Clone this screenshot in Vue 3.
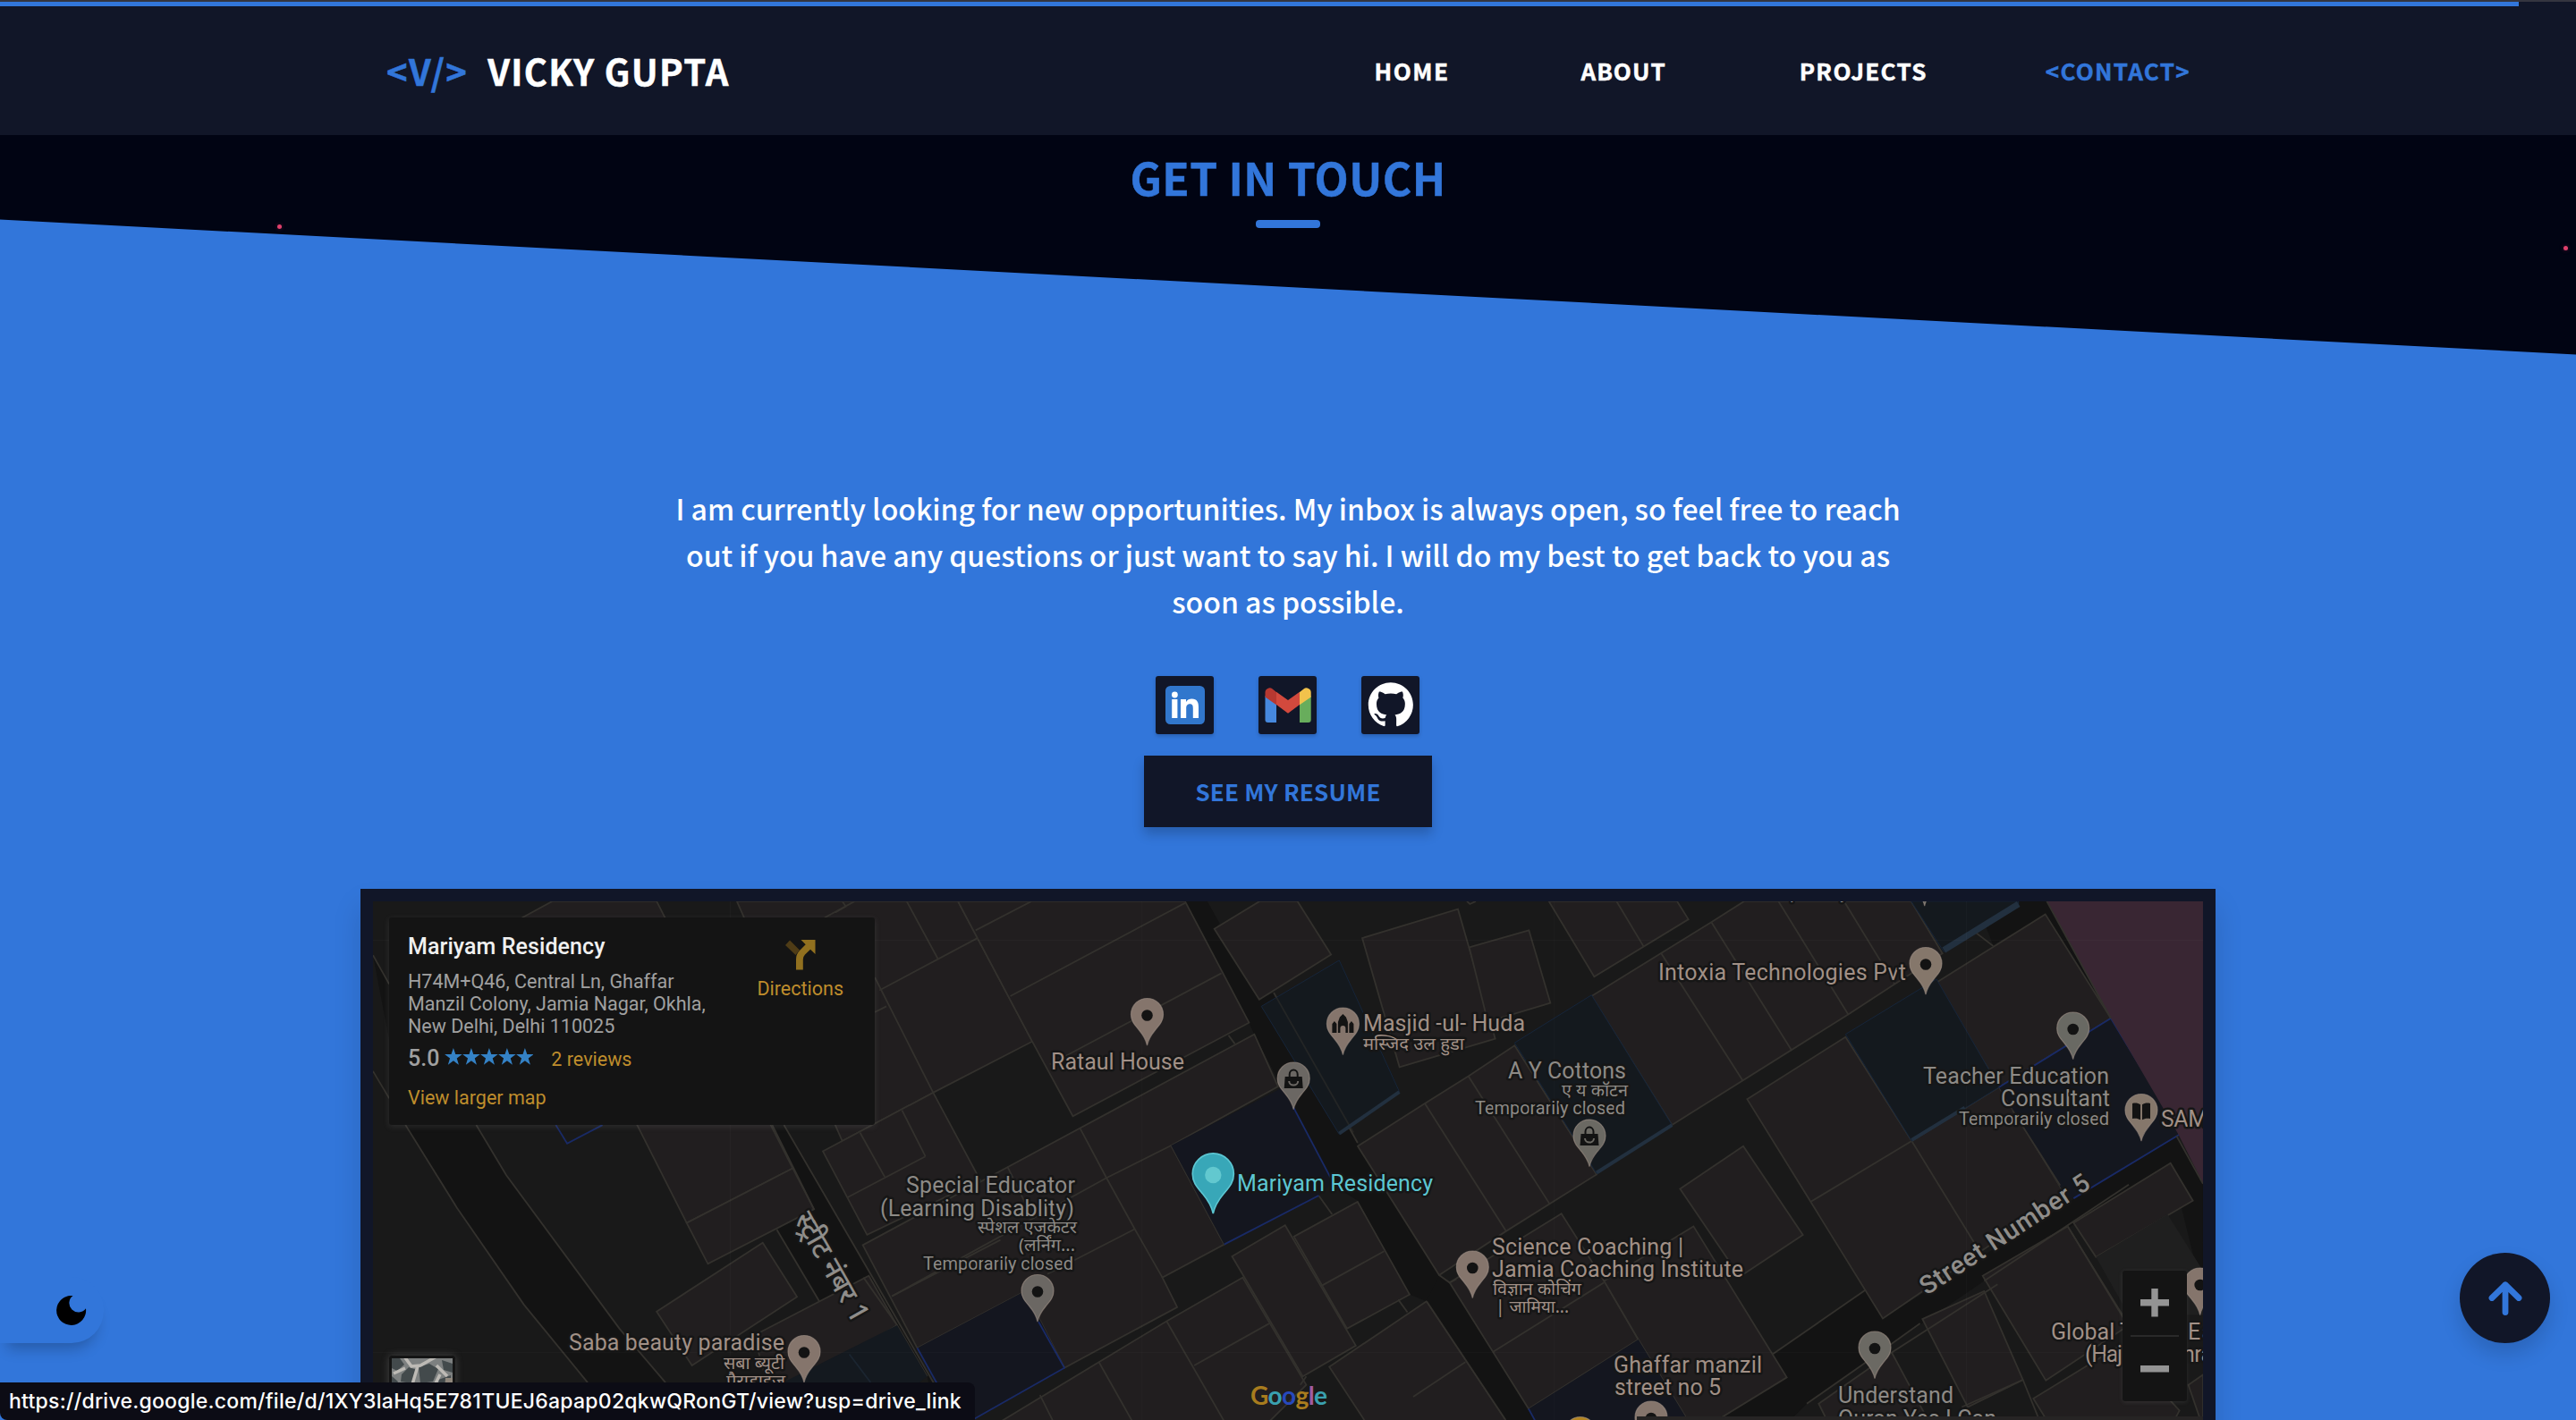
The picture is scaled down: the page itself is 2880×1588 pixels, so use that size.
<script setup>
const nav = [
  { label: 'HOME', spacing: 1.5, gap: 0 },
  { label: 'ABOUT', spacing: 1.04, gap: 147 },
  { label: 'PROJECTS', spacing: 1.3, gap: 149 },
  { label: '<CONTACT>', spacing: 1.3, gap: 132, active: true },
]

// Street grid, west half
const westRoads = [
  '43,205 135,703 280,945 470,1230 650,1458 740,1590 960,1590 870,1458 740,1300 420,850 335,703',
  '1170,703 1205,703 1450,1140 1640,1480 1640,1590 1610,1440 1525,1290 1445,1145 1305,1220 1185,1010 1290,950',
  '2339,47 2520,403 2535,437 2757,880 2828,925 2975,1200 3022,1220 3225,1590 3600,1590 3057,1143 2827,760 2590,315 2547,335 2422,128 2437,112 2402,47',
]
const westBlocks = [
  '465,95 550,47 845,47 1230,830 930,990 790,703',
  '930,990 1230,830 1290,950 990,1110',
  '845,1250 1145,1048 1242,1207 945,1408',
  '1120,1320 1445,1145 1525,1290 1390,1375 1240,1450 1160,1470',
  '1072,47 1697,47 1907,458 1627,608 1370,750',
  '1315,780 1627,608 1760,865 1440,1025',
  '1697,47 2339,47 2520,403 2022,677 1907,458',
  '1428,1055 2535,437 2602,590 2300,763 2450,1053 2275,1150 2317,1237 1998,1415 1887,1190 1582,1357',
  '2422,128 2550,47 2657,47 2752,203 2549,335',
  '2472,1088 2622,997 2822,1350 2672,1440',
  '2647,1030 2827,928 2974,1200 2797,1300',
  '1790,1590 2287,1278 2502,1150 2682,1465 2560,1590',
  '2747,1412 3022,1220 3260,1590 2860,1590',
]
const westLines = [
  '43,205 89,290', '43,545 89,625', '135,703 280,945 470,1230 650,1458', '335,703 420,850 740,1300 870,1458',
  '1172,703 1290,950', '1205,703 1450,1140 1640,1480', '1185,1010 1305,1220', '1430,1150 1525,1290 1610,1440',
  '1420,725 1490,855', '1385,915 1605,795', '1539,660 1605,795', '1495,355 1462,372', '1475,308 1752,155',
  '1552,47 1640,215', '1462,270 1627,608', '1320,95 1405,47', '1370,47 1380,62 1350,80',
  '1747,132 1905,47', '1845,325 2339,52', '1957,525 2442,258', '1837,825 1905,970', '2042,712 2117,858 2197,1008 2275,1150',
  '2117,858 2300,763', '2300,763 2450,1053', '2197,1008 1950,1140', '2117,858 1510,1205', '1510,1205 1817,1040',
  '2724,1175 2902,1073', '2365,1408 2577,1285', '2287,1278 2460,1590', '1929,1495 1975,1590', '2095,1397 2200,1590',
  '2462,440 2480,465', '2717,910 2755,965', '2942,1215 2968,1252', '2682,1440 2665,1465', '2590,315 2827,755',
]
// Street grid, east half
const eastRoads = [
  '1145,1375 1455,1188 1515,1270 2155,920 2500,735 2589,870 2589,1200 2480,815 1855,1160 1545,1345 1260,1520 1180,1590 960,1568 1193,1443',
  '-15,1220 27,1143 62,1165 327,1535 350,1590 250,1568',
  '1970,47 2065,47 2280,390 2060,85 1885,175 1860,120 1970,60',
]
const eastBlocks = [
  '-231,155 90,70 215,450 -106,533',
  '128,182 328,132 400,345 190,400',
  '395,47 825,47 863,100 547,268',
  '-246,765 -21,640 125,560 280,470 555,848 250,1015 27,1143',
  '538,325 940,108 1050,47 1610,47 1715,200 1555,290 1400,378 808,703',
  '1695,285 2060,85 2280,390 1905,592',
  '1060,627 1390,445 1612,750 1905,592 2125,905 1515,1270',
  '835,890 1047,765 1247,1025 1035,1148',
  '62,1165 437,963 580,1160 695,1332 327,1535',
  '580,1160 880,1000 1193,1443 960,1568 860,1568 695,1332',
  '1648,1272 1855,1190 1985,1450 1800,1530',
  '1850,1145 2135,1000 2340,1290 2062,1452',
  '2155,990 2480,815 2555,925 2230,1090',
  '2020,1505 2310,1350 2510,1540 2480,1590 2080,1590',
  '2540,1465 2589,1435 2589,1590',
  '1300,1520 1545,1370 1680,1590 1340,1590',
]
const eastLines = [
  '622,47 713,180', '125,560 398,935', '-21,640 250,1012', '772,200 1045,572', '940,108 1210,485', '1165,47 1400,380', '1385,47 1555,290',
  '1275,927 1612,750 1830,1060', '208,1368 580,1165', '-60,1500 115,1398', '27,1143 62,1165 85,1155', '-15,1220 250,1568',
  '1690,47 1885,178', '1545,1370 1900,1170', '1855,1160 2340,878', '1985,1450 2040,1568', '2135,1000 2330,1280', '1145,1375 1455,1188', '1260,1520 1440,1410 1640,1285',
  '1780,1530 1985,1450', '120,47 130,55 150,47',
]

const brown = '#a19086'
const grey = '#8d8a86'
const cyan = '#5cc6d2'
const labels = [
  { t: 'Rataul House', x: 1175, y: 1196, w: 149, c: brown },
  { t: 'Masjid -ul- Huda', x: 1524, y: 1153, w: 181, c: brown },
  { t: 'मस्जिद उल हुडा', x: 1524, y: 1174, w: 113, c: brown, s: 19, hi: true },
  { t: 'Mariyam Residency', x: 1383, y: 1332, w: 219, c: cyan },
  { t: 'Special Educator', x: 1013, y: 1334, w: 189, c: grey },
  { t: '(Learning Disablity)', x: 984, y: 1360, w: 217, c: grey },
  { t: 'स्पेशल एजकेटर', x: 1093, y: 1379, w: 111, c: grey, s: 19, hi: true },
  { t: '(लर्निंग...', x: 1139, y: 1399, w: 63, c: grey, s: 19, hi: true },
  { t: 'Temporarily closed', x: 1032, y: 1420, w: 168, c: grey, s: 20 },
  { t: 'Saba beauty paradise', x: 636, y: 1510, w: 241, c: brown },
  { t: 'सबा ब्यूटी', x: 809, y: 1531, w: 68, c: brown, s: 19, hi: true },
  { t: 'पैराडाइज', x: 812, y: 1551, w: 66, c: brown, s: 19, hi: true },
  { t: 'A Y Cottons', x: 1686, y: 1206, w: 132, c: grey },
  { t: 'ए य कॉटन', x: 1746, y: 1226, w: 74, c: grey, s: 19, hi: true },
  { t: 'Temporarily closed', x: 1649, y: 1246, w: 168, c: grey, s: 20 },
  { t: 'Intoxia Technologies Pvt', x: 1854, y: 1096, w: 277, c: brown },
  { t: 'Teacher Education', x: 2150, y: 1212, w: 208, c: grey },
  { t: 'Consultant', x: 2237, y: 1237, w: 122, c: grey },
  { t: 'Temporarily closed', x: 2190, y: 1258, w: 168, c: grey, s: 20 },
  { t: 'SAM', x: 2416, y: 1260, w: 52, c: brown },
  { t: 'Science Coaching |', x: 1668, y: 1403, w: 214, c: brown },
  { t: 'Jamia Coaching Institute', x: 1668, y: 1428, w: 281, c: brown },
  { t: 'विज्ञान कोचिंग', x: 1669, y: 1448, w: 99, c: brown, s: 19, hi: true },
  { t: '| जामिया...', x: 1672, y: 1468, w: 82, c: brown, s: 19, hi: true },
  { t: 'Ghaffar manzil', x: 1804, y: 1535, w: 166, c: brown },
  { t: 'street no 5', x: 1805, y: 1560, w: 119, c: brown },
  { t: 'Understand', x: 2055, y: 1569, w: 129, c: grey },
  { t: 'Quran Yes I Can', x: 2055, y: 1595, w: 177, c: grey },
  { t: 'Global T', x: 2293, y: 1498, w: 92, c: brown },
  { t: 'Ea', x: 2446, y: 1498, w: 29, c: brown },
  { t: '(Haj', x: 2331, y: 1523, w: 42, c: brown },
  { t: 'mra', x: 2432, y: 1523, w: 42, c: brown },
  { t: 'Temporarily closed', x: 1962, y: 1005, w: 168, c: grey, s: 20 },
]

const pins = [
  { x: 1282.5, y: 1169, c: '#85756c' },
  { x: 1501.4, y: 1179.5, c: '#85756c', k: 'mosque' },
  { x: 1446.2, y: 1240.5, c: '#6b6763', k: 'bag' },
  { x: 1160, y: 1478, c: '#6b6763' },
  { x: 899, y: 1546, c: '#85756c' },
  { x: 1646.3, y: 1451.5, c: '#85756c' },
  { x: 1777, y: 1304.6, c: '#6b6963', k: 'bag' },
  { x: 2153, y: 1112, c: '#85776b' },
  { x: 2317.7, y: 1184.5, c: '#696963' },
  { x: 2394, y: 1276, c: '#85776b', k: 'book' },
  { x: 2459.7, y: 1470.5, c: '#85756c' },
  { x: 2096, y: 1541.5, c: '#6b6963' },
  { x: 1846, y: 1619.5, c: '#85756c' },
  { x: 1766.7, y: 1637, c: '#b38420' },
  { x: 2151.7, y: 1013, c: '#6b6963' },
]
</script>

<template>
  <div class="page">
    <div class="progress"><span class="progress-bar"></span></div>

    <header class="header">
      <div class="brand">
        <span class="brand-mark">&lt;V/&gt;</span>
        <span class="brand-name">VICKY GUPTA</span>
      </div>
      <nav class="nav">
        <a
          v-for="n in nav"
          :key="n.label"
          :class="{ active: n.active }"
          :style="{ letterSpacing: n.spacing + 'px', marginLeft: n.gap + 'px' }"
        >{{ n.label }}</a>
      </nav>
    </header>

    <main class="contact">
      <i class="slope"></i>
      <i class="spark spark-left"></i>
      <i class="spark spark-right"></i>

      <h2 class="title">GET IN TOUCH</h2>
      <span class="underline"></span>

      <p class="intro">
        I am currently looking for new opportunities. My inbox is always open, so feel free to reach<br />
        out if you have any questions or just want to say hi. I will do my best to get back to you as<br />
        soon as possible.
      </p>

      <div class="socials">
        <a class="social">
          <svg viewBox="0 0 65 65">
            <rect x="11" y="11" width="44" height="43" rx="5.5" fill="#3177cd" />
            <circle cx="21.4" cy="21" r="3.4" fill="#fff" />
            <path fill="#fff" d="M18.2 26h6.2v21h-6.2zM28 26h6v2.900c1.300-2.300 3.700-3.400 6.500-3.400 6 0 7.500 4 7.500 9.200V47h-6.200V36.300c0-2.500-.2-5-3.500-5s-4.100 2.400-4.100 5V47H28z" />
          </svg>
        </a>
        <a class="social">
          <svg viewBox="0 0 65 65">
            <path fill="#4688de" d="M7.500 22 20 31v21h-9.500a3 3 0 0 1-3-3z" />
            <path fill="#68ad5c" d="M58.700 22 46 31v21h9.700a3 3 0 0 0 3-3z" />
            <path fill="#b73831" d="M7.500 23.500v-5a5 5 0 0 1 8.200-3.900L20 18v14.200z" />
            <path fill="#f2c24c" d="M58.700 23.500v-5a5 5 0 0 0-8.200-3.900L46 18v14.200z" />
            <path fill="#d2493d" d="m20 17.700 13 9.400 13-9.400v14.400l-13 9.600-13-9.600z" />
          </svg>
        </a>
        <a class="social">
          <svg viewBox="0 0 65 65">
            <path
              fill="#fff"
              transform="translate(7.800 7.300) scale(3.130)"
              d="M8 0C3.580 0 0 3.580 0 8c0 3.540 2.290 6.530 5.470 7.590.4.070.55-.17.55-.38 0-.19-.01-.82-.01-1.490-2.010.37-2.530-.49-2.690-.94-.09-.23-.48-.94-.82-1.130-.28-.15-.68-.52-.01-.53.63-.01 1.080.58 1.230.82.72 1.210 1.870.87 2.330.66.070-.52.28-.87.51-1.070-1.780-.2-3.640-.89-3.640-3.950 0-.87.31-1.590.82-2.150-.08-.2-.36-1.020.08-2.120 0 0 .67-.21 2.200.82.64-.18 1.320-.27 2-.27s1.360.09 2 .27c1.530-1.040 2.200-.82 2.200-.82.44 1.100.16 1.920.08 2.120.51.56.82 1.270.82 2.150 0 3.070-1.870 3.750-3.650 3.950.29.25.54.73.54 1.480 0 1.070-.01 1.930-.01 2.200 0 .21.15.46.55.38A8.010 8.010 0 0 0 16 8c0-4.420-3.580-8-8-8z"
            />
          </svg>
        </a>
      </div>

      <a class="resume">SEE MY RESUME</a>

      <section class="map">
        <svg class="map-canvas" viewBox="417 1008 2046 580">
          <defs>
            <path id="pin" d="M0 0C-1.500-7-4-11-9-17-14-23-18-27-18-34.500a18 18 0 0 1 36 0C18-27 14-23 9-17 4-11 1.500-7 0 0z" />
          </defs>
          <rect x="417" y="1008" width="2046" height="580" fill="#191919" />

          <g transform="translate(400 990) scale(0.3954 0.3814)">
            <polygon v-for="p in westRoads" :key="p" :points="p" fill="#131313" />
            <polygon v-for="p in westBlocks" :key="p" :points="p" class="block" />
            <polyline v-for="p in westLines" :key="p" :points="p" class="edge" />
            <polygon points="2300,763 2617,592 2757,870 2717,910 2450,1053" fill="#14161f" />
            <polyline points="2645,650 2757,870" class="edge blue" />
            <polyline points="2717,910 2450,1053" class="edge blue" />
            <polygon points="1582,1357 1887,1190 1998,1415 1745,1560 1690,1590 1637,1458" fill="#14161f" />
            <polyline points="1925,1280 1998,1415 1700,1590" class="edge blue" />
            <polyline points="1582,1357 1640,1465" class="edge blue" />
            <polygon points="1160,1480 1525,1290 1610,1440 1560,1480 1500,1590 1200,1590" fill="#14191f" />
            <polyline points="1390,1375 1450,1458" class="edge navy" />
            <polygon points="2555,355 2775,220 2945,605 2775,730" class="plot" />
            <polyline points="2590,315 2815,725" class="edge" opacity=".5" />
            <polyline points="2775,728 2945,606" class="edge lit" />
            <polyline points="560,703 592,757 692,703" class="edge blue" />
          </g>

          <g transform="translate(1600 990) scale(0.33333 0.3814)">
            <polygon v-for="p in eastRoads" :key="p" :points="p" fill="#131313" />
            <polygon v-for="p in eastBlocks" :key="p" :points="p" class="block" />
            <polyline v-for="p in eastLines" :key="p" :points="p" class="edge" />
            <polygon points="2230,1090 2470,965 2589,1130 2589,1260 2340,1260" fill="#1f1f1f" />
            <polygon points="280,462 538,322 808,703 555,845" class="plot" />
            <polyline points="555,843 808,703" class="edge lit" />
            <polygon points="1390,437 1695,275 1905,592 1612,750" class="plot" />
            <polyline points="1612,747 1790,652" class="edge lit" />
            <polygon points="1610,47 1970,47 1970,60 1720,195" class="plot" />
            <polyline points="1720,190 1970,55" class="edge lit wide" />
            <polygon points="1905,592 2280,390 2515,730 2155,920 2125,905" fill="#14171f" />
            <polyline points="1905,592 2280,390 2515,728 2155,918" class="edge blue" />
            <polyline points="1950,660 2110,880" class="edge" />
            <polygon points="2065,47 2589,47 2589,875 2505,728 2280,390" fill="#392633" />
            <polyline points="2065,47 2280,390" class="edge" />
            <polyline points="2500,735 2589,875" class="edge" />
            <polygon points="327,1535 695,1332 860,1568 880,1590 360,1590" fill="#14161f" />
            <polyline points="327,1535 355,1580" class="edge blue" />
          </g>

          <path d="M816.500 1008v580M1276.800 1008v580M1737.700 1008v580M2198.500 1008v580M417 1051.500h2046M417 1512.500h2046" stroke="#fff" stroke-opacity=".025" fill="none" />

          <g v-for="p in pins" :key="p.x" :transform="`translate(${p.x} ${p.y})`">
            <use href="#pin" :fill="p.c" stroke="#a3948a" stroke-opacity=".6" stroke-width="1.2" />
            <circle v-if="!p.k" cy="-33.500" r="6.300" fill="#131313" />
            <g v-else-if="p.k === 'bag'">
              <path d="M-9.500-36.500h19L10.500-23.500h-21z" fill="#131313" />
              <path d="M-4.500-36v-3a4.500 5 0 0 1 9 0v3" fill="none" stroke="#131313" stroke-width="2" />
              <path d="M-5-31.500a5 4.500 0 0 0 10 0" fill="none" :stroke="p.c" stroke-width="2" />
            </g>
            <path v-else-if="p.k === 'mosque'" fill="#131313" d="M-12-24.500v-10l2.500-3 2.500 3v10zM7-24.500v-10l2.500-3 2.500 3v10zM-5.500-24.500v-12l2-5.500 3.500-3.500 3.500 3.500 2 5.500v12h-2.500v-5a3 3 0 0 0-6 0v5z" />
            <path v-else fill="#131313" d="M-10-42c3.500-.8 6.500-.4 9 1.300v17c-2.500-1.700-5.500-2-9-1.300zM10-42c-3.500-.8-6.500-.4-9 1.300v17c2.500-1.700 5.500-2 9-1.300z" />
          </g>

          <g transform="translate(1356.300 1357)">
            <use href="#pin" transform="scale(1.280)" fill="#38a7b8" stroke="#5cc6d2" stroke-width="1.300" />
            <circle cy="-43" r="9.200" fill="#62c8cf" />
          </g>

          <text
            v-for="(l, i) in labels"
            :key="i"
            class="label"
            :class="{ hi: l.hi }"
            :x="l.x"
            :y="l.y"
            :fill="l.c"
            :font-size="l.s || 25"
            :textLength="l.w"
            :lengthAdjust="l.hi ? 'spacingAndGlyphs' : 'spacing'"
          >{{ l.t }}</text>

          <text class="label street" transform="translate(2154 1449) rotate(-33.300)" font-size="28.500" textLength="221">Street Number 5</text>
          <text class="label street hi" transform="translate(887 1363) rotate(60.500)" font-size="32" textLength="136" lengthAdjust="spacingAndGlyphs">स्ट्रीट नंबर 1</text>

          <text class="google" x="1398" y="1571" font-size="28" textLength="86"><tspan fill="#a87c1e">G</tspan><tspan fill="#3aa0af">o</tspan><tspan fill="#2749bd">o</tspan><tspan fill="#a87c1e">g</tspan><tspan fill="#a25ba0">l</tspan><tspan fill="#3aa0af">e</tspan></text>

          <rect x="1830" y="1584" width="633" height="4" fill="#262424" />
        </svg>

        <div class="place">
          <div class="place-info">
            <h3>Mariyam Residency</h3>
            <p>H74M+Q46, Central Ln, Ghaffar<br />Manzil Colony, Jamia Nagar, Okhla,<br />New Delhi, Delhi 110025</p>
            <div class="rating">
              <b>5.0</b>
              <span class="stars">
                <svg v-for="s in 5" :key="s" viewBox="0 0 20 20"><path fill="#3482c6" d="m10 0 2.400 7.100h7.500l-6 4.500 2.200 7.300L10 14.500l-6.100 4.400 2.200-7.300-6-4.500h7.500z" /></svg>
              </span>
              <a>2 reviews</a>
            </div>
            <a class="larger">View larger map</a>
          </div>
          <div class="directions">
            <svg viewBox="0 0 34 34">
              <path d="M0 6 5 0.500 16 11.500 11.500 17z" fill="#4f3c16" />
              <path d="M17.500 0H33.500V16L28 10.800 22 16.500Q19.800 18.800 19.800 22V33.500H12V22Q12 16 16 12L22.700 5.300z" fill="#91701f" />
            </svg>
            <a>Directions</a>
          </div>
        </div>

        <div class="satellite">
          <svg viewBox="0 0 68 68">
            <rect width="68" height="68" fill="#7d8080" />
            <path fill="#434a4c" d="M0 0h9l5 7-8 7-6-3zM11 18l8-8 9 3-6 15-12-2zM30 10l12-4 10 6-6 14-14 2zM0 20l7 6-7 12zM56 2l12 4v10l-10-3zM52 24l14-5v18l-12-2z" />
            <path stroke="#bdbab5" stroke-width="3.500" fill="none" d="M14-2 22 9 32 8 50-2M29 9l-6 20M2 17l13-6M50 8l12 12M48 30l6-12" />
            <path fill="#8f867c" d="M60 22h8v14h-9z" />
          </svg>
        </div>

        <div class="zoom">
          <svg viewBox="0 0 32 32"><path d="M12.300 0h7.400v12h12.300v7.500H19.700v12h-7.400v-12H0V12h12.300z" fill="#949494" /></svg>
          <hr />
          <svg viewBox="0 0 32 32"><path d="M0 12h32v7.500H0z" fill="#949494" /></svg>
        </div>
      </section>
    </main>

    <div class="theme">
      <svg viewBox="0 0 34 34"><path d="M18.500 0A16.500 16.500 0 1 0 33 14.300 10.300 10.300 0 1 1 18.500 0z" fill="#000" /></svg>
    </div>

    <div class="to-top">
      <svg viewBox="0 0 38 38"><path d="M19 34.500V4M4 18.500 19 3.800 34 18.500" fill="none" stroke="#3276da" stroke-width="6.800" stroke-linecap="round" stroke-linejoin="round" /></svg>
    </div>

    <div class="status">https://drive.google.com/file/d/1XY3laHq5E781TUEJ6apap02qkwQRonGT/view?usp=drive_link</div>
  </div>
</template>

<style>
body {
  margin: 0;
  overflow: hidden;
}
</style>

<style scoped>
.page {
  position: relative;
  width: 2880px;
  height: 1588px;
  overflow: hidden;
  background: #010413;
  color: #fff;
  font-family: "Noto Sans CJK SC", sans-serif;
}
.progress {
  position: absolute;
  z-index: 2;
  top: 0;
  left: 0;
  right: 0;
  height: 5px;
  border-top: 2px solid #34353f;
}
.progress-bar {
  display: block;
  width: 2816px;
  height: 5px;
  background: #3276da;
}
.header {
  box-sizing: border-box;
  height: 151px;
  padding: 6px 431px 0 432px;
  display: flex;
  align-items: center;
  justify-content: space-between;
  background: #111628;
  font-weight: 700;
  -webkit-text-stroke: 0.5px;
}
.brand {
  display: flex;
  gap: 22px;
  font-size: 40px;
  line-height: 60px;
  letter-spacing: 1.3px;
}
.brand-mark,
.nav .active {
  color: #3276da;
}
.nav {
  display: flex;
  font-size: 26px;
  line-height: 40px;
}
.contact {
  position: relative;
  height: 1437px;
  display: flex;
  flex-direction: column;
  align-items: center;
}
.contact > * {
  flex: none;
}
.slope {
  position: absolute;
  inset: 0;
  background: #3276da;
  clip-path: polygon(0 94.500px, 100% 245.500px, 100% 100%, 0 100%);
}
.spark {
  position: absolute;
  width: 5px;
  height: 5px;
  border-radius: 50%;
  background: #e0406c;
  box-shadow: 0 0 4px #a0204c80;
}
.spark-left {
  left: 310px;
  top: 100px;
}
.spark-right {
  left: 2866px;
  top: 124px;
}
.title {
  position: relative;
  margin: 11px 0 0;
  font-size: 49.500px;
  line-height: 72px;
  font-weight: 700;
  letter-spacing: 0.500px;
  color: #3276da;
  -webkit-text-stroke: 0.5px;
}
.underline {
  position: relative;
  width: 72px;
  height: 9px;
  margin-top: 12px;
  border-radius: 4px;
  background: #3276da;
}
.intro {
  position: relative;
  margin: 287px 0 0;
  font-size: 32px;
  font-weight: 500;
  line-height: 52px;
  letter-spacing: -0.020px;
  text-align: center;
  white-space: nowrap;
}
.socials {
  position: relative;
  display: flex;
  gap: 50px;
  margin: 58px 1px 0 0;
}
.social {
  width: 65px;
  height: 65px;
  border-radius: 3px;
  background: #111628;
  box-shadow: 0 2px 4px #0003;
}
.social svg {
  display: block;
}
.resume {
  position: relative;
  width: 322px;
  height: 80px;
  margin-top: 24px;
  background: #111628;
  box-shadow: 0 8px 12px #0003;
  color: #3276da;
  font-size: 26px;
  font-weight: 700;
  line-height: 80px;
  letter-spacing: 0.180px;
  text-align: center;
}
.map {
  position: relative;
  width: 2046px;
  height: 600px;
  margin-top: 69px;
  border: 14px solid #111628;
  box-shadow: 0 20px 30px #0002;
}
.map-canvas {
  display: block;
  width: 2046px;
  height: 580px;
}
.block {
  fill: #211e1f;
  stroke: #33312d;
  stroke-width: 1.800px;
  vector-effect: non-scaling-stroke;
}
.edge {
  fill: none;
  stroke: #33312d;
  stroke-width: 1.800px;
  vector-effect: non-scaling-stroke;
}
.edge.blue {
  stroke: #192a66;
}
.edge.navy {
  stroke: #1b2530;
}
.edge.lit {
  stroke: #22303f;
  stroke-width: 4px;
}
.edge.wide {
  stroke-width: 7px;
}
.plot {
  fill: #14191e;
  stroke: #16253a;
  stroke-width: 1px;
  vector-effect: non-scaling-stroke;
}
.label {
  font-family: Roboto, "Noto Sans", sans-serif;
  paint-order: stroke;
  stroke: #161616;
  stroke-width: 5px;
  stroke-linejoin: round;
}
.label.hi {
  font-family: "Noto Sans", sans-serif;
}
.street {
  fill: #8f8d8a;
  font-weight: 500;
}
.google {
  font-family: Lato, sans-serif;
  font-weight: 700;
}
.place {
  position: absolute;
  left: 18px;
  top: 18px;
  box-sizing: border-box;
  width: 543px;
  height: 232px;
  padding: 18px 35px 0 21px;
  display: flex;
  justify-content: space-between;
  border-radius: 3px;
  background: #141414;
  box-shadow: 0 2px 7px #8883;
  color: #a0a0a0;
  font-family: Roboto, sans-serif;
  font-size: 21.500px;
  line-height: 25px;
}
.place h3 {
  margin: 0;
  font-size: 25px;
  line-height: 30px;
  font-weight: 500;
  letter-spacing: 0.080px;
  color: #f0f0f0;
}
.place p {
  margin: 11px 0 8px;
  white-space: nowrap;
}
.place a {
  color: #bf8d2c;
}
.rating {
  display: flex;
  align-items: center;
  height: 30px;
  margin-bottom: 17px;
}
.rating b {
  font-size: 25px;
  font-weight: 500;
}
.stars {
  display: flex;
  margin: -3px 20px 0 6px;
}
.stars svg {
  width: 19.800px;
  height: 19.800px;
}
.rating a {
  padding-top: 2px;
}
.directions {
  display: flex;
  flex-direction: column;
  align-items: center;
  padding-top: 7px;
}
.directions svg {
  width: 34px;
  height: 34px;
  margin-bottom: 8px;
}
.satellite {
  position: absolute;
  left: 18px;
  top: 508px;
  width: 68px;
  height: 68px;
  border: 3px solid #141414;
  border-radius: 4px;
  box-shadow: 0 0 8px #8886;
}
.satellite svg {
  display: block;
}
.zoom {
  position: absolute;
  right: 18px;
  top: 413px;
  width: 72px;
  height: 146px;
  display: flex;
  flex-direction: column;
  align-items: center;
  justify-content: space-evenly;
  border-radius: 3px;
  background: #141414;
  box-shadow: 0 1px 5px #8883;
}
.zoom svg {
  width: 32px;
  height: 32px;
}
.zoom hr {
  width: 54px;
  height: 2px;
  margin: 0;
  border: 0;
  background: #2a2a2a;
}
.theme {
  position: absolute;
  left: 0;
  bottom: 86px;
  box-sizing: border-box;
  width: 116px;
  height: 74px;
  padding: 21px 19px 0 0;
  display: flex;
  justify-content: flex-end;
  border-radius: 0 36px 36px 0;
  background: #3276da;
  box-shadow: 0 14px 16px -8px #0000003d;
}
.theme svg {
  width: 34px;
  height: 34px;
}
.to-top {
  position: absolute;
  right: 29px;
  bottom: 86px;
  width: 101px;
  height: 101px;
  display: flex;
  align-items: center;
  justify-content: center;
  border-radius: 50%;
  background: #111628;
  box-shadow: 0 12px 22px #00000026;
}
.to-top svg {
  width: 38px;
  height: 38px;
}
.status {
  position: absolute;
  left: 0;
  bottom: 0;
  box-sizing: border-box;
  width: 1090px;
  height: 42px;
  padding-left: 10px;
  border-radius: 0 8px 0 8px;
  background: #0c0c15;
  font-family: Inter, sans-serif;
  font-size: 23px;
  font-weight: 500;
  line-height: 42px;
  letter-spacing: 0.250px;
  white-space: nowrap;
}
</style>
